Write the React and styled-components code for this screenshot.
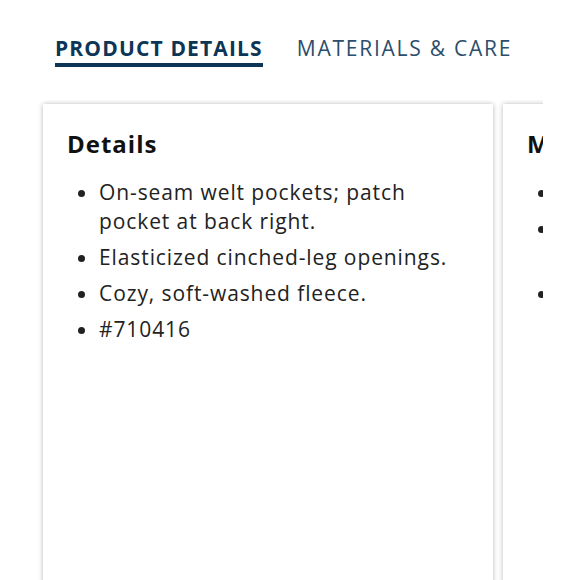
import React from "react";
import styled, { createGlobalStyle } from "styled-components";

const Global = createGlobalStyle`
  html, body { margin: 0; padding: 0; background: #fff; }
  body { font-family: "Open Sans", "Liberation Sans", sans-serif; }
`;

const Page = styled.div`
  width: 580px;
  height: 580px;
  overflow: hidden;
  background: #fff;
`;

const Tabs = styled.div`
  display: flex;
  gap: 34px;
  padding: 36px 0 0 55px;
`;

const Tab = styled.div`
  font-size: 21px;
  line-height: 25px;
  letter-spacing: ${(p) => (p.$active ? "1.15px" : "1.75px")};
  font-weight: ${(p) => (p.$active ? 700 : 400)};
  color: ${(p) => (p.$active ? "#0d3556" : "#2c4d6b")};
  padding-bottom: 2px;
  border-bottom: 4px solid ${(p) => (p.$active ? "#0d3556" : "transparent")};
`;

const Viewport = styled.div`
  width: 543px;
  overflow: hidden;
  margin-top: 33px;
  padding: 4px 0 0 43px;
  box-sizing: border-box;
`;

const Track = styled.div`
  display: flex;
  gap: 10px;
`;

const Card = styled.section`
  flex: 0 0 450px;
  min-height: 500px;
  box-sizing: border-box;
  background: #fff;
  box-shadow: 0 0 5px rgba(0, 0, 0, 0.28);
  padding: 24px 24px;
`;

const Heading = styled.h3`
  margin: 0 0 18px;
  font-size: 24px;
  line-height: 32px;
  font-weight: 700;
  letter-spacing: 1px;
  color: #111;
`;

const List = styled.ul`
  margin: 0;
  padding-left: 32px;
  list-style: disc;
  color: #222;
`;

const Item = styled.li`
  font-size: 21px;
  line-height: 29px;
  letter-spacing: 0.9px;
  margin-bottom: 7px;
`;

const details = [
  "On-seam welt pockets; patch pocket at back right.",
  "Elasticized cinched-leg openings.",
  "Cozy, soft-washed fleece.",
  "#710416",
];

const care = [
  "Cotton/poly.",
  "Machine wash cold, tumble dry low, do not bleach.",
  "Imported.",
];

export default function App() {
  return (
    <Page>
      <Global />
      <Tabs>
        <Tab $active>PRODUCT DETAILS</Tab>
        <Tab>MATERIALS &amp; CARE</Tab>
      </Tabs>
      <Viewport>
        <Track>
          <Card>
            <Heading>Details</Heading>
            <List>
              {details.map((d) => (
                <Item key={d}>{d}</Item>
              ))}
            </List>
          </Card>
          <Card>
            <Heading>Materials &amp; Care</Heading>
            <List>
              {care.map((d) => (
                <Item key={d}>{d}</Item>
              ))}
            </List>
          </Card>
        </Track>
      </Viewport>
    </Page>
  );
}
